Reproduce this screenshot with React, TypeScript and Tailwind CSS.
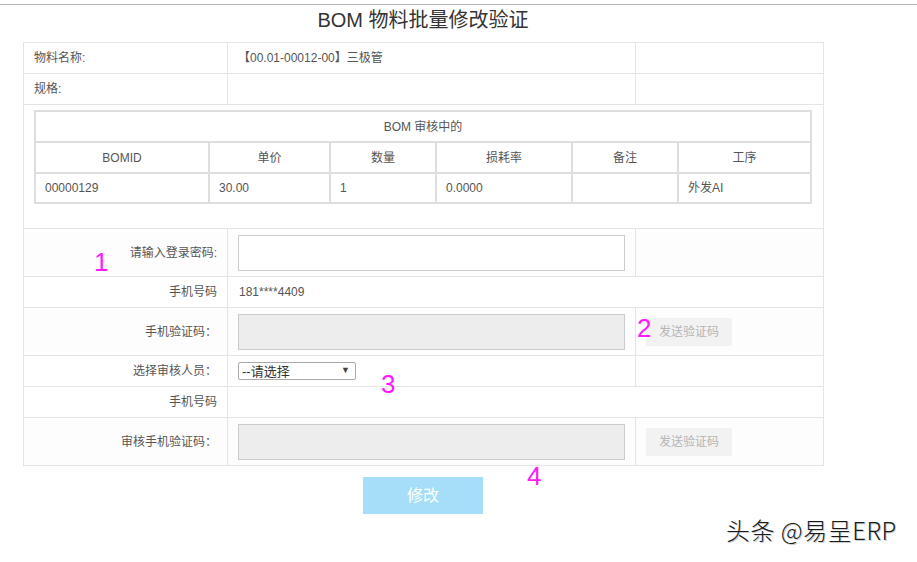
import { FC } from 'react';

const font = { fontFamily: '"Liberation Sans", "Noto Sans CJK SC", sans-serif' };

const bomCols = [
  { title: 'BOMID', value: '00000129', w: 'w-[174px]' },
  { title: '单价', value: '30.00', w: 'w-[121px]' },
  { title: '数量', value: '1', w: 'w-[106px]' },
  { title: '损耗率', value: '0.0000', w: 'w-[136px]' },
  { title: '备注', value: '', w: 'w-[106px]' },
  { title: '工序', value: '外发AI', w: 'w-[133px]' },
];

const SendButton: FC = () => (
  <div className="flex h-[28px] w-[86px] items-center justify-center bg-[#f2f2f2] text-[12px] text-[#b5b5b5]">
    发送验证码
  </div>
);

const Mark: FC<{ n: string; className: string }> = ({ n, className }) => (
  <span className={`absolute text-[26px] leading-none text-[#ff19ff] ${className}`}>{n}</span>
);

const App: FC = () => {
  const td = 'border border-[#e4e4e4] text-[12px] text-[#555]';
  const label = `${td} text-right pr-[10px]`;

  return (
    <div className="relative h-[562px] w-[917px] overflow-hidden bg-white" style={font}>
      <div className="h-[4px]" />
      <div className="border-t border-[#b4b4b4]" />

      <div className="ml-[23px] w-[800px]">
        <h1 className="flex h-[37px] items-center justify-center pb-[7px] text-[20px] font-normal text-[#333]">
          BOM 物料批量修改验证
        </h1>

        <table className="w-[800px] table-fixed border-collapse">
          <colgroup>
            <col className="w-[204px]" />
            <col className="w-[408px]" />
            <col className="w-[188px]" />
          </colgroup>
          <tbody>
            <tr className="h-[31px]">
              <td className={`${td} pl-[10px]`}>物料名称:</td>
              <td className={`${td} pl-[10px]`}>【00.01-00012-00】三极管</td>
              <td className={td} />
            </tr>
            <tr className="h-[31px]">
              <td className={`${td} pl-[10px]`}>规格:</td>
              <td className={td} />
              <td className={td} />
            </tr>
            <tr className="h-[123px]">
              <td colSpan={3} className={`${td} px-[10px] pt-[5px] pb-[24px] align-top`}>
                <table className="w-[776px] table-fixed border-collapse">
                  <colgroup>
                    {bomCols.map((c) => (
                      <col key={c.title} className={c.w} />
                    ))}
                  </colgroup>
                  <tbody>
                    <tr className="h-[31px]">
                      <td colSpan={6} className="border-2 border-[#dedede] text-center">
                        BOM 审核中的
                      </td>
                    </tr>
                    <tr className="h-[31px]">
                      {bomCols.map((c) => (
                        <td key={c.title} className="border-2 border-[#dedede] text-center">
                          {c.title}
                        </td>
                      ))}
                    </tr>
                    <tr className="h-[30px]">
                      {bomCols.map((c) => (
                        <td key={c.title} className="border-2 border-[#dedede] pl-[9px]">
                          {c.value}
                        </td>
                      ))}
                    </tr>
                  </tbody>
                </table>
              </td>
            </tr>
            <tr className="h-[48px] bg-[#fdfdfd]">
              <td className={label}>请输入登录密码:</td>
              <td className={`${td} pl-[10px]`}>
                <div className="h-[36px] w-[387px] border border-[#cccccc] bg-white" />
              </td>
              <td className={td} />
            </tr>
            <tr className="h-[31px]">
              <td className={label}>手机号码</td>
              <td colSpan={2} className={`${td} pl-[11px] text-[#555]`}>181****4409</td>
            </tr>
            <tr className="h-[48px] bg-[#fdfdfd]">
              <td className={label}>手机验证码：</td>
              <td className={`${td} pl-[10px]`}>
                <div className="h-[36px] w-[387px] border border-[#cccccc] bg-[#ededed]" />
              </td>
              <td className={`${td} pl-[10px]`}>
                <SendButton />
              </td>
            </tr>
            <tr className="h-[31px]">
              <td className={label}>选择审核人员：</td>
              <td className={`${td} pl-[10px]`}>
                <div className="flex h-[18px] w-[118px] items-center justify-between rounded-[2px] border border-[#a9a9a9] bg-white pl-[3px] pr-[5px] text-[13px] text-[#333]">
                  <span className="leading-none">--请选择</span>
                  <span className="text-[9px] text-[#444]">▼</span>
                </div>
              </td>
              <td className={td} />
            </tr>
            <tr className="h-[31px]">
              <td className={label}>手机号码</td>
              <td colSpan={2} className={td} />
            </tr>
            <tr className="h-[48px] bg-[#fdfdfd]">
              <td className={label}>审核手机验证码：</td>
              <td className={`${td} pl-[10px]`}>
                <div className="h-[36px] w-[387px] border border-[#cccccc] bg-[#ededed]" />
              </td>
              <td className={`${td} pl-[10px]`}>
                <SendButton />
              </td>
            </tr>
          </tbody>
        </table>

        <div className="mt-[11px] flex justify-center">
          <button className="flex h-[37px] w-[120px] items-center justify-center bg-[#a6ddf8] text-[16px] text-white">
            修改
          </button>
        </div>
      </div>

      <Mark n="1" className="left-[94px] top-[249px]" />
      <Mark n="2" className="left-[637px] top-[315px]" />
      <Mark n="3" className="left-[381px] top-[371px]" />
      <Mark n="4" className="left-[527px] top-[463px]" />

      <div
        className="absolute left-[726px] top-[518px] text-[24px] leading-none tracking-[0.5px] text-[#1a1a1a] [text-shadow:1px_1px_0_#ccc]"
        style={{ fontFamily: '"Noto Sans CJK SC", sans-serif', fontWeight: 300 }}
      >
        头条 @易呈ERP
      </div>
    </div>
  );
};

export default App;
